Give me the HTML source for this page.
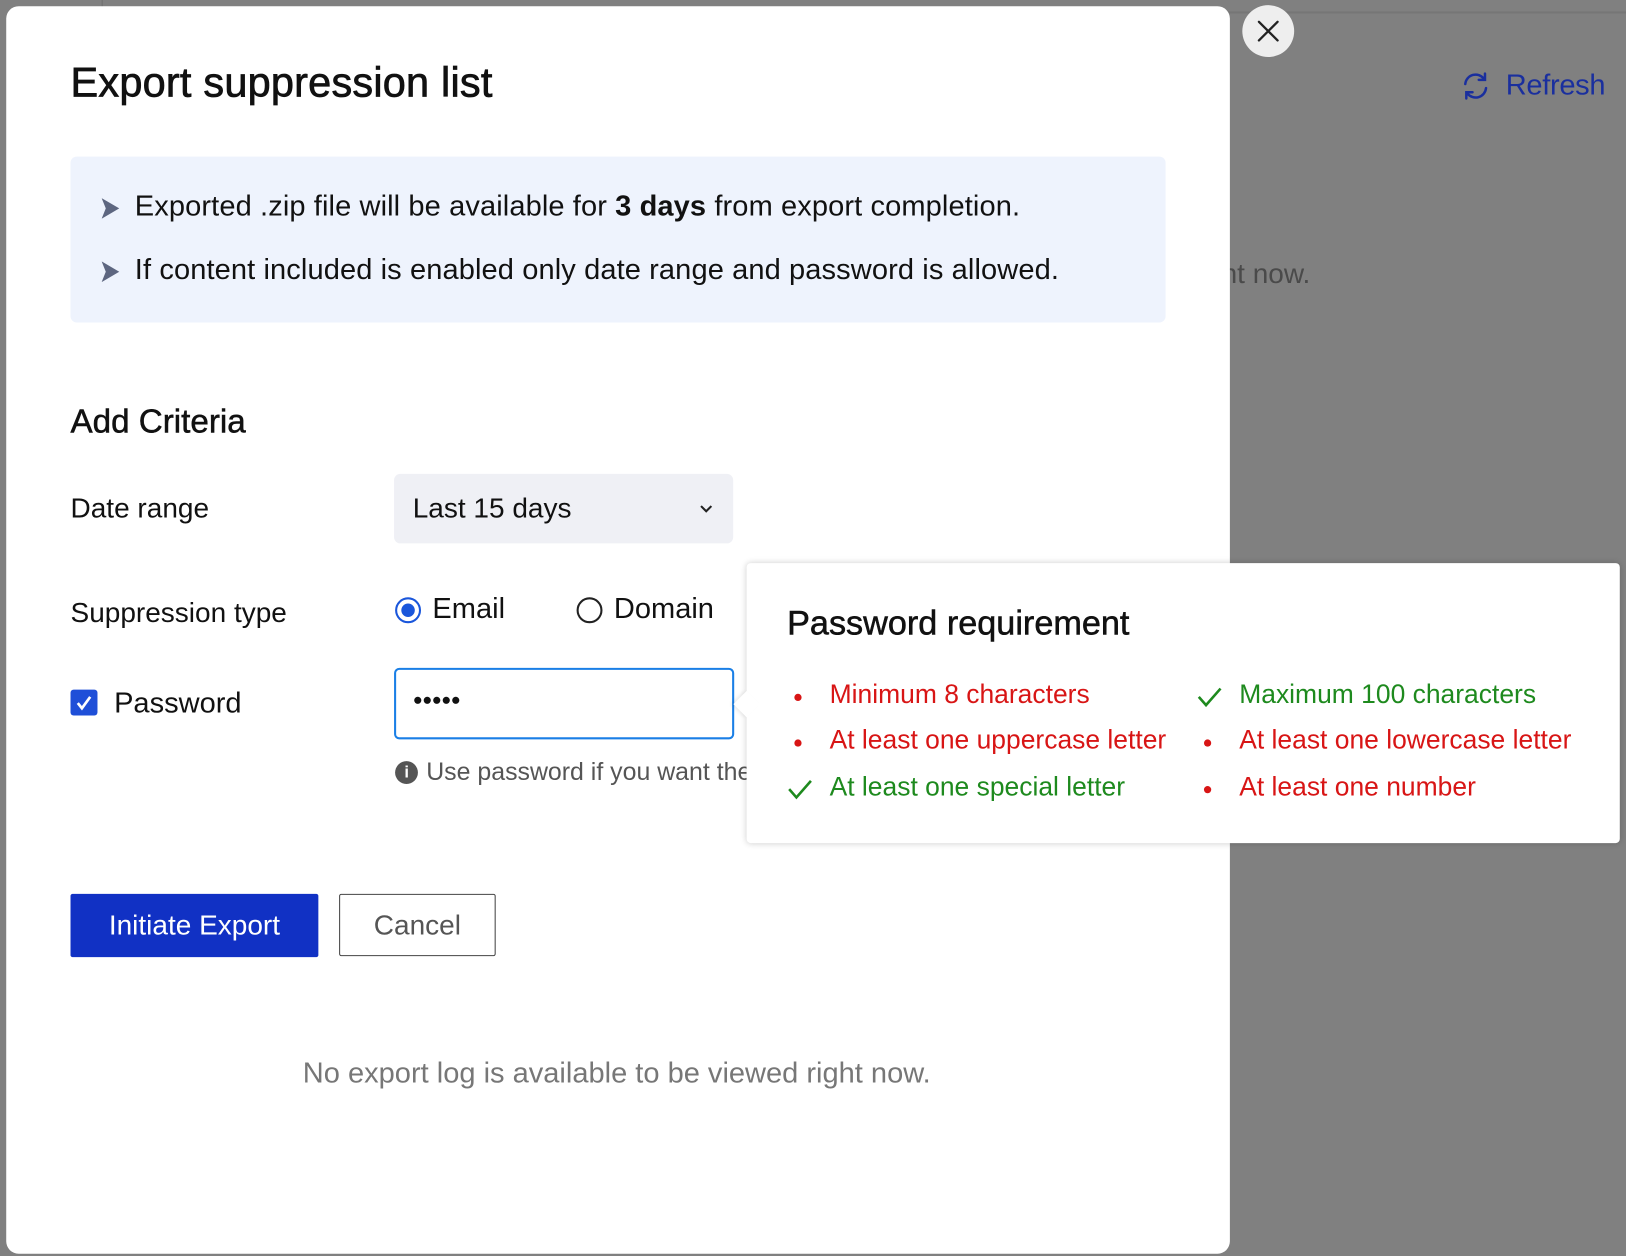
<!DOCTYPE html>
<html><head><meta charset="utf-8"><style>
html,body{margin:0;padding:0;width:1626px;height:1256px;overflow:hidden;background:#808080;font-family:"Liberation Sans",sans-serif}
#w{position:absolute;left:0;top:0;width:1568px;height:1211px;transform:scale(1.037);transform-origin:0 0}
.a{position:absolute;white-space:nowrap}
.modal{position:absolute;left:6px;top:6px;width:1180px;height:1203px;background:#fff;border-radius:12px}
.t{color:#111}
.m{-webkit-text-stroke:0.7px #111}
.red{color:#d81515}.grn{color:#1e8a1e}
.dot{position:absolute;width:7px;height:7px;border-radius:50%;background:#d81515}
</style></head><body><div id="w">
<div class="a" style="left:98px;top:0;width:1px;height:12px;background:#6f6f6f"></div>
<div class="a" style="left:98px;top:11px;width:1470px;height:2px;background:#767676"></div>
<svg class="a" style="left:1408px;top:68px" width="30" height="30" viewBox="0 0 30 30" fill="none" stroke="#1a2f9e" stroke-width="2.4" stroke-linecap="round"><path d="M5 13a10 10 0 0 1 18-5"/><path d="M24 3v6h-6"/><path d="M25 17a10 10 0 0 1-18 5"/><path d="M6 27v-6h6"/></svg>
<div class="a" style="left:1452px;top:66px;font-size:28px;color:#1a2f9e;letter-spacing:-0.3px">Refresh</div>
<div class="a" style="left:1178px;top:249px;font-size:27px;color:#4a4a4a">nt now.</div>
<div class="a" style="left:1198px;top:5px;width:50px;height:50px;border-radius:50%;background:#eee"></div>
<svg class="a" style="left:1211px;top:18px" width="24" height="24" viewBox="0 0 24 24" stroke="#222" stroke-width="2.2" stroke-linecap="round"><path d="M3 3l18 18M21 3L3 21"/></svg>

<div class="modal"></div>
<div class="a t m" style="left:68px;top:58px;font-size:40px;letter-spacing:0.2px">Export suppression list</div>
<div class="a" style="left:68px;top:151px;width:1056px;height:160px;background:#eef3fd;border-radius:6px"></div>
<svg class="a" style="left:98px;top:191px" width="18" height="20"><path d="M0 0L17 10L0 20L4 10Z" fill="#5d6680"/></svg>
<svg class="a" style="left:98px;top:252px" width="18" height="20"><path d="M0 0L17 10L0 20L4 10Z" fill="#5d6680"/></svg>
<div class="a t" style="left:130px;top:183px;font-size:28px;letter-spacing:0.1px">Exported .zip file will be available for <b>3 days</b> from export completion.</div>
<div class="a t" style="left:130px;top:244px;font-size:28px;letter-spacing:0.1px">If content included is enabled only date range and password is allowed.</div>
<div class="a t m" style="left:68px;top:388px;font-size:32px;-webkit-text-stroke-width:0.5px">Add Criteria</div>
<div class="a t" style="left:68px;top:475px;font-size:27px">Date range</div>
<div class="a" style="left:380px;top:457px;width:327px;height:67px;background:#eff0f5;border-radius:6px"></div>
<div class="a t" style="left:398px;top:475px;font-size:27px">Last 15 days</div>
<svg class="a" style="left:674px;top:486px" width="14" height="10"><path d="M2 2l5 5 5-5" stroke="#222" stroke-width="2" fill="none"/></svg>
<div class="a t" style="left:68px;top:576px;font-size:27px">Suppression type</div>
<div class="a" style="left:381px;top:576px;width:21px;height:21px;border:2px solid #1a56db;border-radius:50%"></div>
<div class="a" style="left:387px;top:582px;width:13px;height:13px;background:#1a56db;border-radius:50%"></div>
<div class="a t" style="left:417px;top:571px;font-size:28px">Email</div>
<div class="a" style="left:556px;top:576px;width:21px;height:21px;border:2px solid #222;border-radius:50%"></div>
<div class="a t" style="left:592px;top:571px;font-size:28px">Domain</div>
<div class="a" style="left:68px;top:665px;width:26px;height:25px;background:#1f4fd8;border-radius:3px"></div>
<svg class="a" style="left:68px;top:665px" width="26" height="25"><path d="M7 13l4 5 8-11" stroke="#fff" stroke-width="2.6" fill="none"/></svg>
<div class="a t" style="left:110px;top:662px;font-size:28px">Password</div>
<div class="a" style="left:380px;top:644px;width:324px;height:65px;border:2px solid #1a7fe6;border-radius:5px"></div>
<div class="a t" style="left:398px;top:667px;font-size:16px;letter-spacing:-0.5px">●●●●●</div>
<div class="a" style="left:381px;top:734px;width:22px;height:22px;border-radius:50%;background:#555"></div>
<div class="a" style="left:390px;top:737px;color:#fff;font-size:16px;font-weight:bold">i</div>
<div class="a" style="left:411px;top:731px;font-size:24px;color:#555;width:309px;overflow:hidden">Use password if you want the</div>
<div class="a" style="left:720px;top:543px;width:842px;height:270px;background:#fff;border-radius:4px;box-shadow:0 0 6px rgba(0,0,0,0.2)"></div>
<div class="a" style="left:711px;top:670px;width:18px;height:18px;background:#fff;transform:rotate(45deg);box-shadow:-2px 2px 3px rgba(0,0,0,0.08)"></div>
<div class="a t m" style="left:759px;top:582px;font-size:33px;-webkit-text-stroke-width:0.5px">Password requirement</div>
<div class="dot" style="left:766px;top:669px"></div>
<div class="a red" style="left:800px;top:656px;font-size:25.5px">Minimum 8 characters</div>
<svg class="a" style="left:1154px;top:661px" width="26" height="22"><path d="M2 11l7 8L23 3" stroke="#1e8a1e" stroke-width="2.5" fill="none"/></svg>
<div class="a grn" style="left:1195px;top:656px;font-size:25.5px">Maximum 100 characters</div>
<div class="dot" style="left:766px;top:713px"></div>
<div class="a red" style="left:800px;top:700px;font-size:25.5px">At least one uppercase letter</div>
<div class="dot" style="left:1161px;top:713px"></div>
<div class="a red" style="left:1195px;top:700px;font-size:25.5px">At least one lowercase letter</div>
<svg class="a" style="left:759px;top:750px" width="26" height="22"><path d="M2 11l7 8L23 3" stroke="#1e8a1e" stroke-width="2.5" fill="none"/></svg>
<div class="a grn" style="left:800px;top:745px;font-size:25.5px">At least one special letter</div>
<div class="dot" style="left:1161px;top:758px"></div>
<div class="a red" style="left:1195px;top:745px;font-size:25.5px">At least one number</div>
<div class="a" style="left:68px;top:862px;width:239px;height:61px;background:#1131c4;border-radius:2px;color:#fff;font-size:27px;text-align:center;line-height:61px">Initiate Export</div>
<div class="a" style="left:327px;top:862px;width:149px;height:58px;border:1.5px solid #444;border-radius:2px;color:#555;font-size:27px;text-align:center;line-height:58px">Cancel</div>
<div class="a" style="left:292px;top:1019px;font-size:28px;color:#777">No export log is available to be viewed right now.</div>
</div></body></html>
